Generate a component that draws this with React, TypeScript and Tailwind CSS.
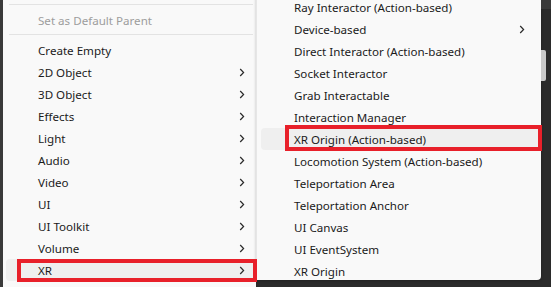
import React from 'react';

const Chevron = () => (
  <svg width="6" height="9" viewBox="0 0 6 9" className="shrink-0">
    <path d="M1.2 1 L4.6 4.5 L1.2 8" fill="none" stroke="#2a2a2a" strokeWidth="1.2" />
  </svg>
);

const leftItems = [
  { label: 'Create Empty', sub: false },
  { label: '2D Object', sub: true },
  { label: '3D Object', sub: true },
  { label: 'Effects', sub: true },
  { label: 'Light', sub: true },
  { label: 'Audio', sub: true },
  { label: 'Video', sub: true },
  { label: 'UI', sub: true },
  { label: 'UI Toolkit', sub: true },
  { label: 'Volume', sub: true },
  { label: 'XR', sub: true, active: true },
];

const rightItems = [
  { label: 'Ray Interactor (Action-based)', sub: false },
  { label: 'Device-based', sub: true },
  { label: 'Direct Interactor (Action-based)', sub: false },
  { label: 'Socket Interactor', sub: false },
  { label: 'Grab Interactable', sub: false },
  { label: 'Interaction Manager', sub: false },
  { label: 'XR Origin (Action-based)', sub: false, active: true },
  { label: 'Locomotion System (Action-based)', sub: false },
  { label: 'Teleportation Area', sub: false },
  { label: 'Teleportation Anchor', sub: false },
  { label: 'UI Canvas', sub: false },
  { label: 'UI EventSystem', sub: false },
  { label: 'XR Origin', sub: false },
];

const App = () => {
  return (
    <div
      className="relative w-[551px] h-[287px] overflow-hidden flex bg-[#2b2b2b] text-[11.6px] text-[#1b1b1b]"
      style={{ fontFamily: '"Noto Sans", "Open Sans", sans-serif' }}
    >
      {/* dark strip on the left */}
      <div className="w-[3px] bg-[#3a3a3a]" />

      {/* main context menu */}
      <div className="w-[253px] h-full bg-[#f9f9f9] pt-[4px]">
        <div className="h-px bg-[#e3e3e3] ml-[6px] mr-[3px]" />
        <div className="h-[22px] mt-[4px] pt-[2px] flex items-center pl-[35px] text-[#9d9d9d]">
          Set as Default Parent
        </div>
        <div className="h-px bg-[#e3e3e3] ml-[6px] mr-[3px] mt-[3px]" />
        <div className="mt-[4px]">
          {leftItems.map((item) => (
            <div
              key={item.label}
              className={`h-[22px] flex items-center justify-between pl-[32px] pr-[11px] ml-[3px] rounded-[4px] ${
                item.active ? 'bg-[#efefef]' : ''
              }`}
            >
              <span className="pt-[2px]">{item.label}</span>
              {item.sub && <Chevron />}
            </div>
          ))}
        </div>
      </div>

      {/* XR submenu */}
      <div className="w-[285px] h-[284px] bg-[#f9f9f9] border-l border-[#e6e6e6] shadow-[0_1px_3px_rgba(0,0,0,0.25)] rounded-br-[4px] -mt-[4px]">
        {rightItems.map((item) => (
          <div
            key={item.label}
            className={`h-[22px] flex items-center justify-between pl-[33px] pr-[16px] ml-[4px] rounded-[4px] ${
              item.active ? 'bg-[#efefef]' : ''
            }`}
          >
            <span className="pt-[2px]">{item.label}</span>
            {item.sub && <Chevron />}
          </div>
        ))}
      </div>

      {/* right dark area with scrollbar */}
      <div className="flex-1 flex flex-col">
        <div className="h-[9px] bg-[#3a3a3a]" />
        <div className="flex-1 pt-[41px]">
          <div className="w-[5px] h-[31px] bg-[#c9c9c9] rounded-r-[2px]" />
        </div>
      </div>

      {/* red annotation boxes */}
      <div className="absolute left-[17px] top-[259px] w-[240px] h-[23px] border-[4px] border-[#e8202a]" />
      <div className="absolute left-[285px] top-[125px] w-[257px] h-[26px] border-[4px] border-[#e8202a]" />
    </div>
  );
};

export default App;
